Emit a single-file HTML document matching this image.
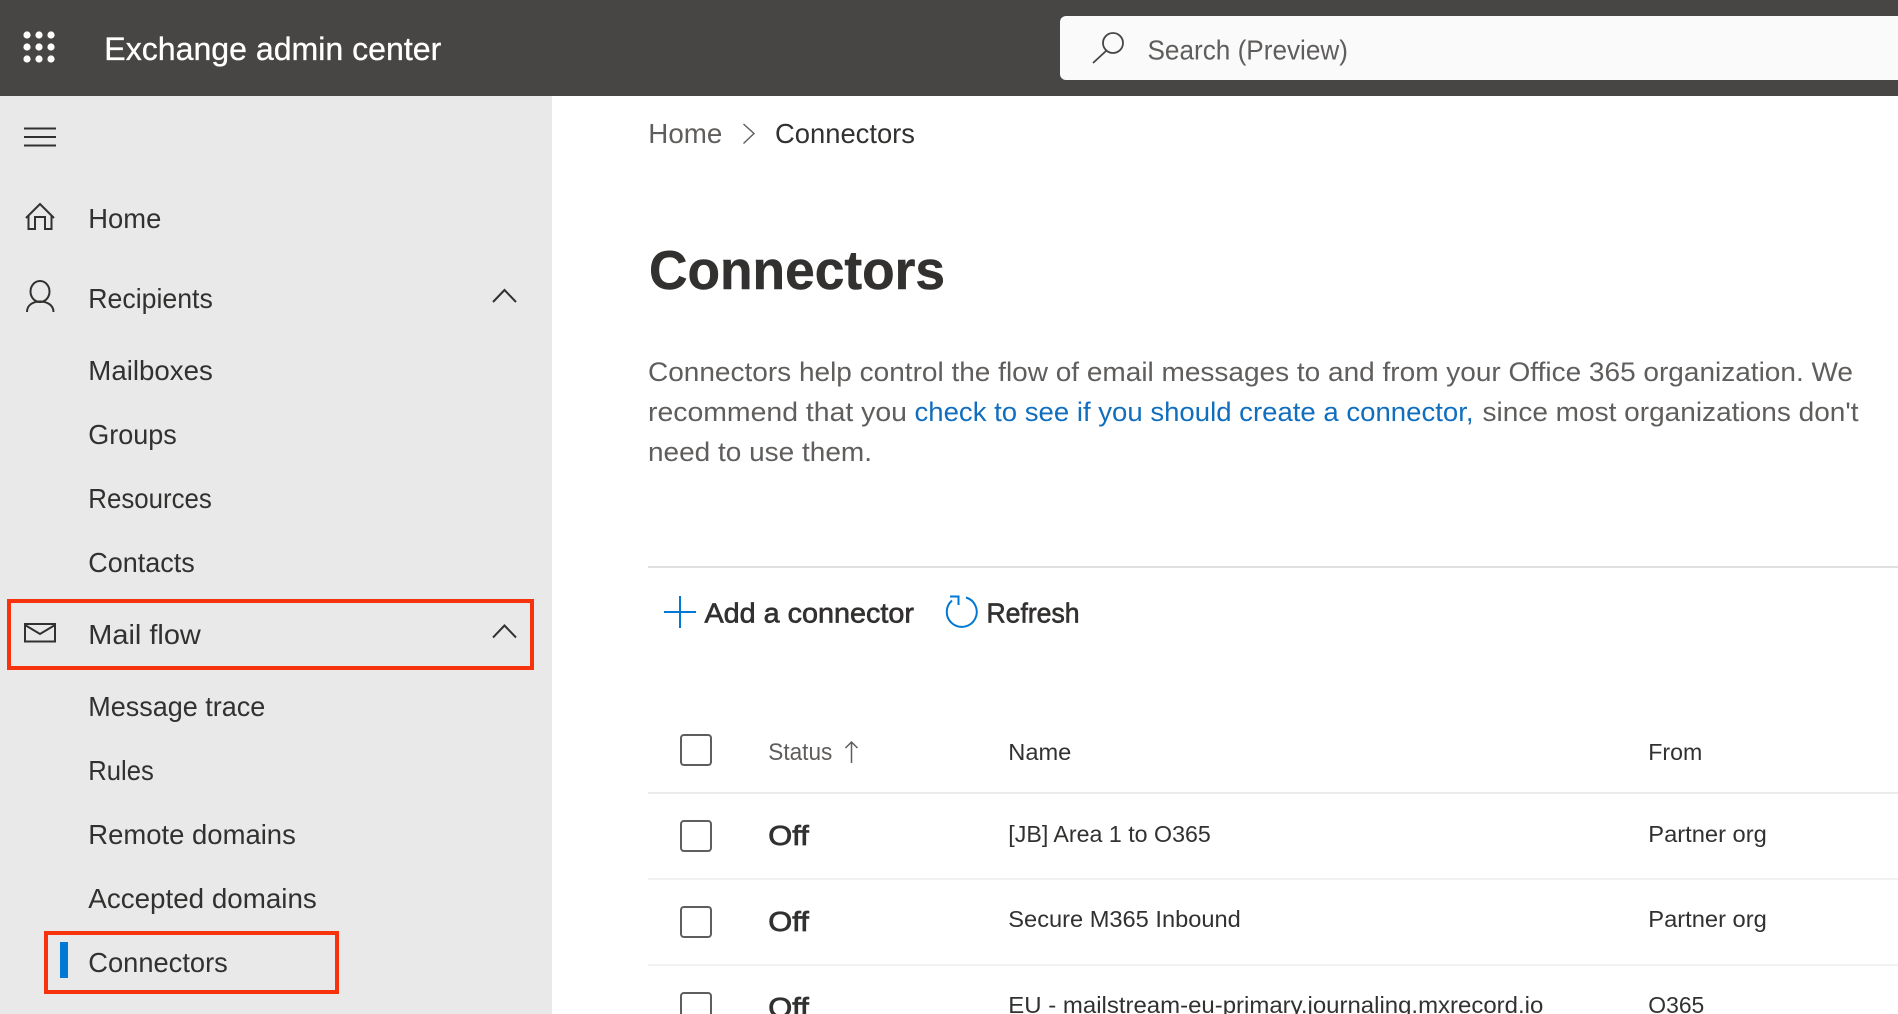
<!DOCTYPE html>
<html lang="en">
<head>
<meta charset="utf-8">
<title>Exchange admin center</title>
<style>
html,body{margin:0;padding:0;width:1898px;height:1014px;overflow:hidden;background:#fff}
svg{display:block}
text{font-family:"Liberation Sans",Arial,sans-serif;font-kerning:normal}
.nav{font-size:27.5px;fill:#323130}
.p{font-size:26.5px;fill:#605e5c}
.t{font-size:23.5px;fill:#323130}
.semi{stroke-width:.65px}
</style>
</head>
<body>
<svg xmlns="http://www.w3.org/2000/svg" width="1898" height="1014" viewBox="0 0 1898 1014">
<rect width="1898" height="1014" fill="#fff"/>
<rect width="552" height="1014" fill="#e9e9e9"/>
<rect width="1898" height="96" fill="#484644"/>

<g fill="#fff">
<circle cx="27" cy="35" r="3.600"/><circle cx="39" cy="35" r="3.600"/><circle cx="51" cy="35" r="3.600"/>
<circle cx="27" cy="47" r="3.600"/><circle cx="39" cy="47" r="3.600"/><circle cx="51" cy="47" r="3.600"/>
<circle cx="27" cy="59" r="3.600"/><circle cx="39" cy="59" r="3.600"/><circle cx="51" cy="59" r="3.600"/>
</g>
<text x="104.300" y="60" font-size="32" fill="#fff" stroke="#fff" stroke-width=".3" textLength="337" lengthAdjust="spacingAndGlyphs">Exchange admin center</text>

<path d="M1898 16H1066a6 6 0 0 0-6 6v52a6 6 0 0 0 6 6H1898z" fill="#fafafa"/>
<g fill="none" stroke="#484644" stroke-width="1.800">
<circle cx="1113" cy="43" r="10"/>
<path d="M1106 51L1093 63"/>
</g>
<text x="1147.500" y="59.500" font-size="27.500" fill="#605e5c" textLength="200.500" lengthAdjust="spacingAndGlyphs">Search (Preview)</text>

<g fill="none" stroke="#323130" stroke-width="2">
<path d="M24 128.500H56M24 137H56M24 145.500H56"/>
<path d="M26 218L40 204L54 218M28.500 216V229H35V217H45V229H51.500V216"/>
<ellipse cx="40" cy="291.500" rx="9.500" ry="10.500"/>
<path d="M27 312C27 305 33 301.500 40 301.500S53.500 305 53.500 312"/>
<path d="M493 302L504.500 290L516 302"/>
<rect x="25" y="624" width="30" height="17.500"/>
<path d="M25 625L40 634L55 625"/>
<path d="M493 637.500L504.500 625.500L516 637.500"/>
</g>

<text class="nav" x="88.300" y="228" textLength="73" lengthAdjust="spacingAndGlyphs">Home</text>
<text class="nav" x="88.300" y="308" textLength="124.500" lengthAdjust="spacingAndGlyphs">Recipients</text>
<text class="nav" x="88.300" y="380" textLength="124.500" lengthAdjust="spacingAndGlyphs">Mailboxes</text>
<text class="nav" x="88.300" y="444" textLength="88.500" lengthAdjust="spacingAndGlyphs">Groups</text>
<text class="nav" x="88.300" y="508" textLength="123.500" lengthAdjust="spacingAndGlyphs">Resources</text>
<text class="nav" x="88.300" y="572" textLength="106.500" lengthAdjust="spacingAndGlyphs">Contacts</text>
<text class="nav" x="88.300" y="644" textLength="112.500" lengthAdjust="spacingAndGlyphs">Mail flow</text>
<text class="nav" x="88.300" y="716" textLength="177" lengthAdjust="spacingAndGlyphs">Message trace</text>
<text class="nav" x="88.300" y="780" textLength="65.500" lengthAdjust="spacingAndGlyphs">Rules</text>
<text class="nav" x="88.300" y="844" textLength="207.500" lengthAdjust="spacingAndGlyphs">Remote domains</text>
<text class="nav" x="88.300" y="908" textLength="228.500" lengthAdjust="spacingAndGlyphs">Accepted domains</text>
<text class="nav" x="88.300" y="972" textLength="139.500" lengthAdjust="spacingAndGlyphs">Connectors</text>

<rect x="60" y="942" width="8" height="36" fill="#0078d4"/>
<rect x="9" y="601" width="523" height="67" fill="none" stroke="#f6330c" stroke-width="4"/>
<rect x="46" y="933" width="291" height="59" fill="none" stroke="#f6330c" stroke-width="4"/>

<text x="648.300" y="143" font-size="27.500" fill="#605e5c" textLength="74" lengthAdjust="spacingAndGlyphs">Home</text>
<path d="M743.500 124L754 133.500L743.500 143.500" fill="none" stroke="#605e5c" stroke-width="1.400"/>
<text x="775" y="143" font-size="27.500" fill="#323130" textLength="140" lengthAdjust="spacingAndGlyphs">Connectors</text>
<text x="649" y="289" font-size="55" font-weight="700" fill="#323130" stroke="#323130" stroke-width=".5" textLength="296" lengthAdjust="spacingAndGlyphs">Connectors</text>

<text class="p" x="648" y="381" textLength="1205" lengthAdjust="spacingAndGlyphs">Connectors help control the flow of email messages to and from your Office 365 organization. We</text>
<text class="p" x="648" y="421" textLength="259" lengthAdjust="spacingAndGlyphs">recommend that you</text>
<text class="p" x="914.500" y="421" textLength="559" lengthAdjust="spacingAndGlyphs" style="fill:#106ebe">check to see if you should create a connector,</text>
<text class="p" x="1482.500" y="421" textLength="376" lengthAdjust="spacingAndGlyphs">since most organizations don't</text>
<text class="p" x="648" y="461" textLength="224" lengthAdjust="spacingAndGlyphs">need to use them.</text>

<rect x="648" y="566" width="1250" height="2" fill="#e1dfdd"/>

<path d="M664 612H696M680 596V628" fill="none" stroke="#0078d4" stroke-width="2"/>
<text class="semi" x="704.500" y="622.500" font-size="27.500" fill="#323130" stroke="#323130" textLength="209.500" lengthAdjust="spacingAndGlyphs">Add a connector</text>
<path d="M966 597.500A15 15 0 1 1 952 600.500" fill="none" stroke="#0078d4" stroke-width="2"/>
<path d="M950 596.500H958.500V605" fill="none" stroke="#0078d4" stroke-width="2"/>
<text class="semi" x="986.500" y="622.500" font-size="27.500" fill="#323130" stroke="#323130" textLength="93" lengthAdjust="spacingAndGlyphs">Refresh</text>

<g fill="none" stroke="#605e5c" stroke-width="2">
<rect x="681" y="735" width="30" height="30" rx="3"/>
<rect x="681" y="821" width="30" height="30" rx="3"/>
<rect x="681" y="907" width="30" height="30" rx="3"/>
<rect x="681" y="993" width="30" height="30" rx="3"/>
<path d="M851.500 742V763M845.500 748L851.500 742L857.500 748" stroke-width="1.500"/>
</g>

<text x="768.300" y="760" font-size="24" fill="#605e5c" textLength="64" lengthAdjust="spacingAndGlyphs">Status</text>
<text class="t" x="1008.300" y="760" textLength="63" lengthAdjust="spacingAndGlyphs">Name</text>
<text class="t" x="1648.300" y="760" textLength="54" lengthAdjust="spacingAndGlyphs">From</text>

<rect x="648" y="792" width="1250" height="2" fill="#edebe9"/>
<rect x="648" y="878" width="1250" height="2" fill="#f3f2f1"/>
<rect x="648" y="964" width="1250" height="2" fill="#f3f2f1"/>

<text class="semi" x="768.300" y="845" font-size="28" fill="#323130" stroke="#323130" textLength="40.500" lengthAdjust="spacingAndGlyphs" style="stroke-width:.8px">Off</text>
<text class="semi" x="768.300" y="931" font-size="28" fill="#323130" stroke="#323130" textLength="40.500" lengthAdjust="spacingAndGlyphs" style="stroke-width:.8px">Off</text>
<text class="semi" x="768.300" y="1017" font-size="28" fill="#323130" stroke="#323130" textLength="40.500" lengthAdjust="spacingAndGlyphs" style="stroke-width:.8px">Off</text>

<text class="t" x="1008.300" y="842" textLength="202.500" lengthAdjust="spacingAndGlyphs">[JB] Area 1 to O365</text>
<text class="t" x="1008.300" y="927" textLength="232.500" lengthAdjust="spacingAndGlyphs">Secure M365 Inbound</text>
<text class="t" x="1008.300" y="1013" textLength="535" lengthAdjust="spacingAndGlyphs">EU - mailstream-eu-primary.journaling.mxrecord.io</text>

<text class="t" x="1648.300" y="842" textLength="118.500" lengthAdjust="spacingAndGlyphs">Partner org</text>
<text class="t" x="1648.300" y="927" textLength="118.500" lengthAdjust="spacingAndGlyphs">Partner org</text>
<text class="t" x="1648.300" y="1013" textLength="56" lengthAdjust="spacingAndGlyphs">O365</text>
</svg>
</body>
</html>
